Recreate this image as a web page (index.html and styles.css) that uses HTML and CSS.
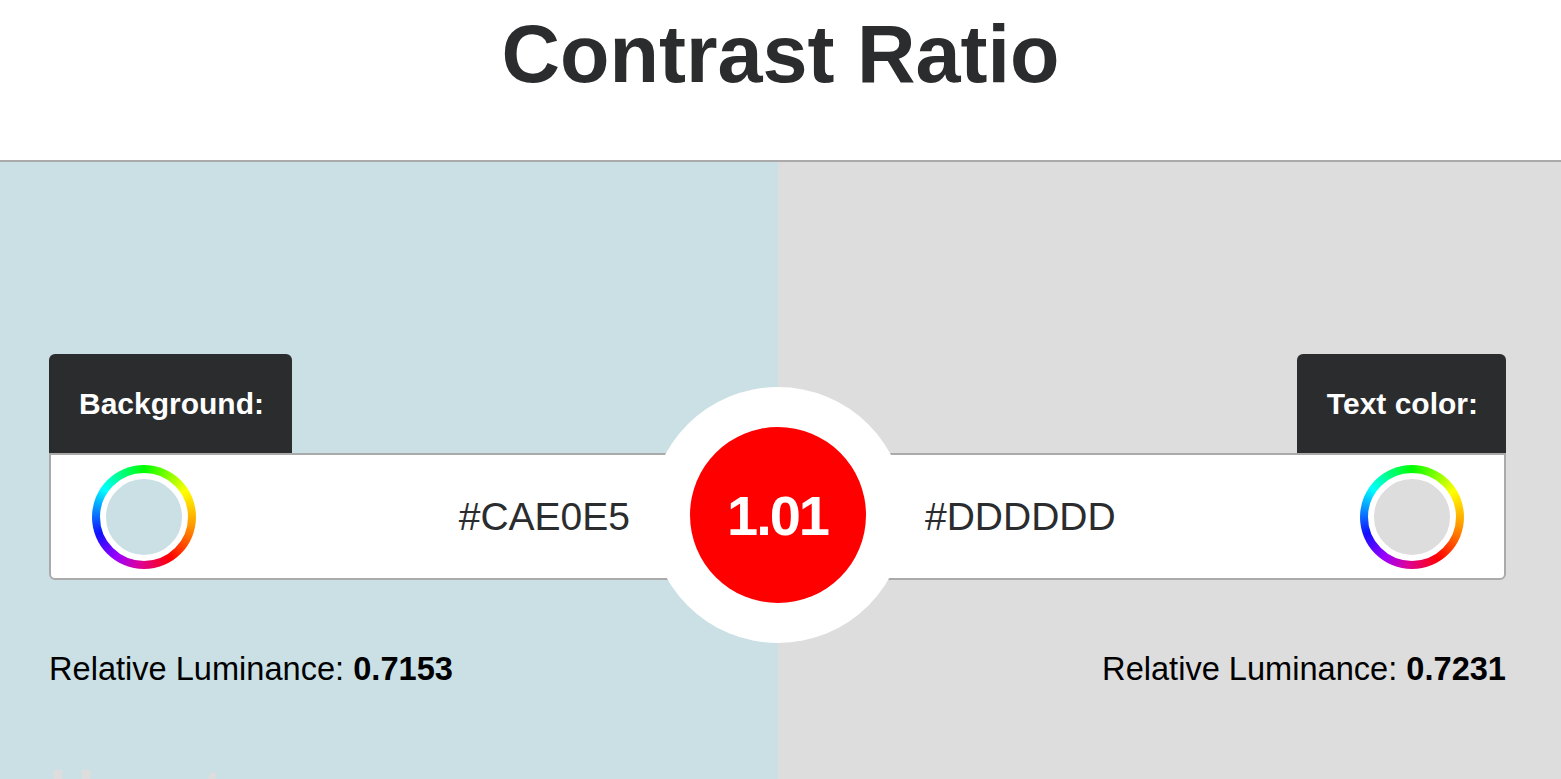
FILE: index.html
```html
<!DOCTYPE html>
<html lang="en">
<head>
<meta charset="utf-8">
<title>Contrast Ratio</title>
<link rel="stylesheet" href="styles.css">
</head>
<body>
<header class="site-header">
  <h1 class="title">Contrast Ratio</h1>
</header>
<main class="checker">
  <div class="tabs">
    <div class="tab">Background:</div>
    <div class="tab">Text color:</div>
  </div>
  <div class="panel">
    <div class="side side-left">
      <div class="wheel"><div class="swatch swatch-bg"></div></div>
      <div class="hex">#CAE0E5</div>
    </div>
    <div class="gap"></div>
    <div class="side side-right">
      <div class="hex">#DDDDDD</div>
      <div class="wheel"><div class="swatch swatch-fg"></div></div>
    </div>
    <div class="ratio-ring"><div class="ratio">1.01</div></div>
  </div>
  <div class="lum-row">
    <div class="lum">Relative Luminance: <b>0.7153</b></div>
    <div class="lum">Relative Luminance: <b>0.7231</b></div>
  </div>
  <h2 class="howto">How to use</h2>
</main>
</body>
</html>
```
FILE: styles.css
```css
* { box-sizing: border-box; }
html, body { margin: 0; padding: 0; }
body {
  font-family: "Liberation Sans", Arial, sans-serif;
  color: #2b2c2e;
  background: #fff;
  overflow: hidden;
  height: 779px;
}
.site-header {
  height: 162px;
  border-bottom: 2px solid #aaaaaa;
  padding-top: 14px;
}
.title {
  margin: 0;
  text-align: center;
  font-size: 81px;
  line-height: 80px;
  font-weight: 700;
  color: #2b2c2e;
}
.checker {
  height: 617px;
  overflow: hidden;
  background: linear-gradient(to right, #cae0e5 778px, #dddddd 778px);
  padding: 192px 55px 0 49px;
}
.tabs {
  display: flex;
  justify-content: space-between;
}
.tab {
  height: 99px;
  background: #2b2c2e;
  color: #fff;
  font-size: 30px;
  font-weight: 700;
  display: flex;
  align-items: center;
  padding: 0 28px 0 30px;
  border-radius: 6px 6px 0 0;
}
.panel {
  position: relative;
  height: 127px;
  background: #fff;
  border: 2px solid #aaaaaa;
  border-radius: 0 0 6px 6px;
  display: grid;
  grid-template-columns: 1fr 295px 1fr;
  align-items: center;
}
.side {
  display: flex;
  align-items: center;
  justify-content: space-between;
}
.side-left { padding-left: 41px; }
.side-right { padding-right: 40px; }
.hex {
  font-size: 39px;
  color: #2b2c2e;
}
.wheel {
  width: 104px;
  height: 104px;
  border-radius: 50%;
  padding: 8px;
  background: conic-gradient(#00ff00 0deg, #ffff00 58deg, #ff9900 100deg, #ff0000 148deg, #dd0099 185deg, #9900ff 215deg, #1010ff 250deg, #00ffff 305deg, #00ff00 360deg);
}
.swatch {
  width: 88px;
  height: 88px;
  border-radius: 50%;
  border: 6px solid #fff;
}
.swatch-bg { background: #cae0e5; }
.swatch-fg { background: #dddddd; }
.ratio-ring {
  position: absolute;
  left: 50%;
  top: 50%;
  width: 256px;
  height: 256px;
  margin: -130px 0 0 -128px;
  border-radius: 50%;
  background: #fff;
  display: flex;
  align-items: center;
  justify-content: center;
}
.ratio {
  width: 176px;
  height: 176px;
  border-radius: 50%;
  background: #ff0000;
  color: #fff;
  font-size: 56px;
  font-weight: 700;
  letter-spacing: -2px;
  display: flex;
  align-items: center;
  justify-content: center;
  padding-top: 2px;
}
.lum-row {
  display: flex;
  justify-content: space-between;
  margin-top: 69px;
}
.lum {
  font-size: 32.6px;
  line-height: 40px;
  color: #000;
}
.lum b { font-weight: 700; }
.howto {
  margin: 68px 0 0;
  font-size: 64px;
  line-height: 72px;
  font-weight: 700;
  color: #dddddd;
}
```
